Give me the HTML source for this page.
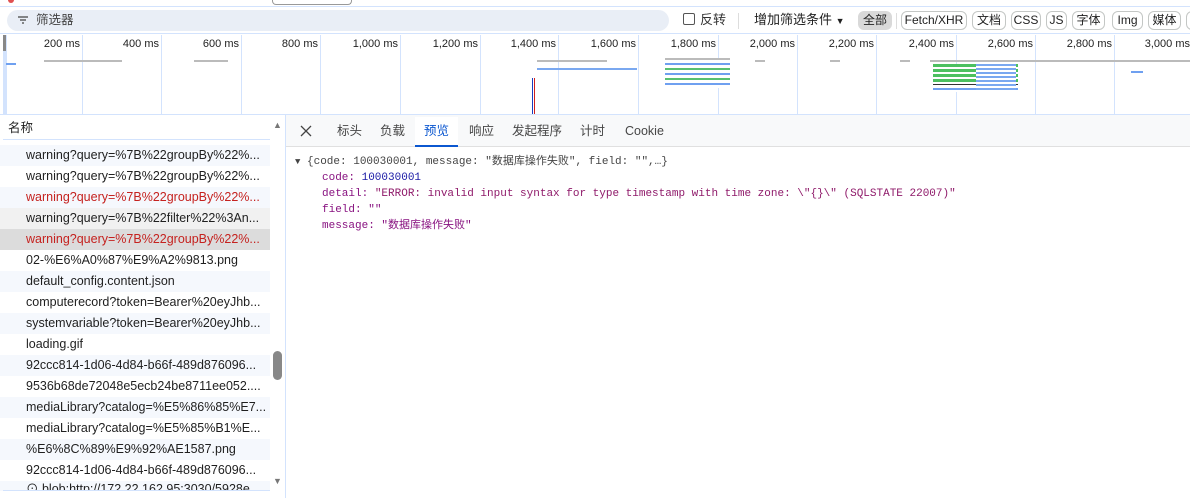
<!DOCTYPE html>
<html><head><meta charset="utf-8"><style>
*{box-sizing:border-box;margin:0;padding:0}
body{width:1190px;height:498px;overflow:hidden;background:#fff;font-family:"Liberation Sans","Noto Sans CJK SC",sans-serif;font-size:12px;color:#1f1f1f;position:relative}
.abs{position:absolute}
.chip{position:absolute;top:11px;height:19px;border:1px solid #c4c7c5;border-radius:6px;font-size:12px;line-height:17px;text-align:center;color:#1f1f1f;background:#fff}
.lbl{position:absolute;top:38px;font-size:11px;color:#222;text-align:right;width:70px}
.vl{position:absolute;top:35px;height:79px;width:1px;background:#d3e3fd}
.row{position:absolute;left:0;width:270px;height:21px;line-height:21px;padding-left:26px;font-size:12.5px;white-space:nowrap;overflow:hidden}
.mono{font-family:"Liberation Mono","Noto Sans CJK SC",monospace;font-size:11px;line-height:14px;position:absolute;white-space:pre}
.tab{position:absolute;top:123px;font-size:12.5px;line-height:16px;height:16px;color:#474747}
.bar{position:absolute;height:2px}
</style></head><body>
<div class="abs" style="left:0;top:0;width:1190px;height:7px;background:#fff;border-bottom:1px solid #d3e3fd"></div>
<div class="abs" style="left:8px;top:0;width:6px;height:3px;background:#e05050;border-radius:0 0 3px 3px"></div>
<div class="abs" style="left:272px;top:0;width:80px;height:5px;border:1px solid #999;border-top:none;border-radius:0 0 4px 4px"></div>
<div class="abs" style="left:7px;top:10px;width:662px;height:21px;background:#e9eef6;border-radius:11px"></div>
<svg class="abs" style="left:17px;top:14px" width="12" height="12"><path d="M1 3h10M3 6h6M5 9h2" stroke="#444" stroke-width="1.3"/></svg>
<div class="abs" style="left:36px;top:12px;font-size:12.5px;line-height:16px;color:#444">筛选器</div>
<div class="abs" style="left:683px;top:13px;width:12px;height:12px;border:1px solid #555;border-radius:2px"></div>
<div class="abs" style="left:700px;top:12px;font-size:13px;line-height:16px;color:#333">反转</div>
<div class="abs" style="left:738px;top:13px;width:1px;height:16px;background:#ddd"></div>
<div class="abs" style="left:754px;top:12px;font-size:13px;line-height:16px;color:#1f1f1f">增加筛选条件 <span style="font-size:9px">▼</span></div>
<div class="chip" style="left:858px;width:34px;background:#d9d9d9;border-color:#d9d9d9">全部</div>
<div class="abs" style="left:896px;top:13px;width:1px;height:16px;background:#ddd"></div>
<div class="chip" style="left:901px;width:66px">Fetch/XHR</div>
<div class="chip" style="left:972px;width:34px">文档</div>
<div class="chip" style="left:1011px;width:30px">CSS</div>
<div class="chip" style="left:1046px;width:21px">JS</div>
<div class="chip" style="left:1072px;width:33px">字体</div>
<div class="chip" style="left:1112px;width:31px">Img</div>
<div class="chip" style="left:1148px;width:33px">媒体</div>
<div class="chip" style="left:1186px;width:20px">&nbsp;</div>
<div class="abs" style="left:0;top:33px;width:1190px;height:1px;background:#d3e3fd"></div>
<div class="abs" style="left:0;top:114px;width:1190px;height:1px;background:#d3e3fd"></div>
<div class="abs" style="left:3px;top:35px;width:4px;height:79px;background:#d3e3fd"></div>
<div class="abs" style="left:3px;top:35px;width:3px;height:16px;background:#888"></div>
<div class="vl" style="left:82px"></div><div class="vl" style="left:161px"></div><div class="vl" style="left:241px"></div><div class="vl" style="left:320px"></div><div class="vl" style="left:400px"></div><div class="vl" style="left:480px"></div><div class="vl" style="left:558px"></div><div class="vl" style="left:638px"></div><div class="vl" style="left:718px"></div><div class="vl" style="left:797px"></div><div class="vl" style="left:876px"></div><div class="vl" style="left:956px"></div><div class="vl" style="left:1035px"></div><div class="vl" style="left:1114px"></div>
<div class="lbl" style="left:10px">200 ms</div><div class="lbl" style="left:89px">400 ms</div><div class="lbl" style="left:169px">600 ms</div><div class="lbl" style="left:248px">800 ms</div><div class="lbl" style="left:328px">1,000 ms</div><div class="lbl" style="left:408px">1,200 ms</div><div class="lbl" style="left:486px">1,400 ms</div><div class="lbl" style="left:566px">1,600 ms</div><div class="lbl" style="left:646px">1,800 ms</div><div class="lbl" style="left:725px">2,000 ms</div><div class="lbl" style="left:804px">2,200 ms</div><div class="lbl" style="left:884px">2,400 ms</div><div class="lbl" style="left:963px">2,600 ms</div><div class="lbl" style="left:1042px">2,800 ms</div><div class="lbl" style="left:1120px">3,000 ms</div>
<div class="bar" style="left:44px;top:60px;width:78px;background:#bbb"></div>
<div class="bar" style="left:194px;top:60px;width:34px;background:#bbb"></div>
<div class="bar" style="left:6px;top:63px;width:10px;background:#6fa0f0"></div>
<div class="abs" style="left:532px;top:78px;width:1px;height:36px;background:#1a3fc0"></div>
<div class="abs" style="left:534px;top:78px;width:1px;height:36px;background:#d02020"></div>
<div class="bar" style="left:537px;top:68px;width:100px;background:#7aa8f0"></div>
<div class="bar" style="left:537px;top:60px;width:70px;background:#bbb"></div>
<div class="abs" style="left:665px;top:58px;width:65px;height:30px;background:linear-gradient(#bbb 0 2px,#fff 2px 5px,#6fa0f0 5px 7px,#fff 7px 10px,#58c070 10px 12px,#fff 12px 15px,#6fa0f0 15px 17px,#fff 17px 20px,#58c070 20px 22px,#fff 22px 25px,#6fa0f0 25px 27px,#fff 27px)"></div>
<div class="bar" style="left:755px;top:60px;width:10px;background:#bbb"></div>
<div class="bar" style="left:830px;top:60px;width:10px;background:#bbb"></div>
<div class="bar" style="left:900px;top:60px;width:10px;background:#bbb"></div>
<div class="bar" style="left:930px;top:60px;width:260px;background:#bbb"></div>
<div class="abs" style="left:933px;top:64px;width:85px;height:28px;background:linear-gradient(#4cc060 0 3px,#fff 3px 5px,#4cc060 5px 8px,#fff 8px 10px,#4cc060 10px 13px,#fff 13px 15px,#4cc060 15px 18px,#fff 18px 20px,#333 20px 21px,#fff 21px 24px,#6fa0f0 24px 26px,#fff 26px)"></div>
<div class="abs" style="left:976px;top:64px;width:40px;height:28px;background:repeating-linear-gradient(#7aa8f0 0 2px,#fff 2px 4px)"></div>
<div class="bar" style="left:1131px;top:71px;width:12px;background:#6fa0f0"></div>
<div class="abs" style="left:0;top:115px;width:286px;height:383px;background:#fff"></div>
<div class="abs" style="left:3px;top:117px;width:267px;height:23px;border-bottom:1px solid #d3e3fd"></div>
<div class="abs" style="left:8px;top:120px;font-size:12.5px;line-height:16px">名称</div>
<div class="abs" style="left:285px;top:115px;width:1px;height:383px;background:#d3e3fd"></div>
<div class="abs" style="left:273px;top:120px;font-size:9px;color:#777">▲</div>
<div class="abs" style="left:273px;top:476px;font-size:9px;color:#777">▼</div>
<div class="abs" style="left:273px;top:351px;width:9px;height:29px;background:#888;border-radius:5px"></div>
<div class="row" style="top:145px;background:#f5f8fd">warning?query=%7B%22groupBy%22%...</div>
<div class="row" style="top:166px">warning?query=%7B%22groupBy%22%...</div>
<div class="row" style="top:187px;background:#f5f8fd;color:#c5221f">warning?query=%7B%22groupBy%22%...</div>
<div class="row" style="top:208px;background:#f1f1f1">warning?query=%7B%22filter%22%3An...</div>
<div class="row" style="top:229px;background:#dcdcdc;color:#c5221f">warning?query=%7B%22groupBy%22%...</div>
<div class="row" style="top:250px">02-%E6%A0%87%E9%A2%9813.png</div>
<div class="row" style="top:271px;background:#f5f8fd">default_config.content.json</div>
<div class="row" style="top:292px">computerecord?token=Bearer%20eyJhb...</div>
<div class="row" style="top:313px;background:#f5f8fd">systemvariable?token=Bearer%20eyJhb...</div>
<div class="row" style="top:334px">loading.gif</div>
<div class="row" style="top:355px;background:#f5f8fd">92ccc814-1d06-4d84-b66f-489d876096...</div>
<div class="row" style="top:376px">9536b68de72048e5ecb24be8711ee052....</div>
<div class="row" style="top:397px;background:#f5f8fd">mediaLibrary?catalog=%E5%86%85%E7...</div>
<div class="row" style="top:418px">mediaLibrary?catalog=%E5%85%B1%E...</div>
<div class="row" style="top:439px;background:#f5f8fd">%E6%8C%89%E9%92%AE1587.png</div>
<div class="row" style="top:460px">92ccc814-1d06-4d84-b66f-489d876096...</div>
<div class="row" style="top:481px;background:#f5f8fd;height:10px;line-height:16px">⊙ blob:http://172.22.162.95:3030/5928e</div>
<div class="abs" style="left:3px;top:490px;width:267px;height:1px;background:#d3e3fd"></div>
<div class="abs" style="left:0;top:491px;width:285px;height:7px;background:#fff"></div>
<div class="abs" style="left:286px;top:115px;width:904px;height:32px;background:#f8f9fa;border-bottom:1px solid #e0e0e0"></div>
<svg class="abs" style="left:300px;top:125px" width="12" height="12"><path d="M1 1L11 11M11 1L1 11" stroke="#444" stroke-width="1.3"/></svg>
<div class="abs" style="left:415px;top:117px;width:43px;height:30px;background:#fff"></div>
<div class="abs" style="left:415px;top:145px;width:43px;height:2px;background:#0b57d0"></div>
<div class="tab" style="left:337px">标头</div><div class="tab" style="left:380px">负载</div><div class="tab" style="left:424px;color:#0b57d0">预览</div><div class="tab" style="left:469px">响应</div><div class="tab" style="left:512px">发起程序</div><div class="tab" style="left:580px">计时</div><div class="tab" style="left:625px">Cookie</div>
<div class="mono" style="left:295px;top:155px;color:#444"><span style="font-size:9px">▼</span> {code: 100030001, message: "数据库操作失败", field: "",…}</div>
<div class="mono" style="left:322px;top:171px;color:#881280">code: <span style="color:#1a1aa6">100030001</span></div>
<div class="mono" style="left:322px;top:187px;color:#881280">detail: <span style="color:#8f1a6a">"ERROR: invalid input syntax for type timestamp with time zone: \"{}\" (SQLSTATE 22007)"</span></div>
<div class="mono" style="left:322px;top:203px;color:#881280">field: <span>""</span></div>
<div class="mono" style="left:322px;top:219px;color:#881280">message: <span>"数据库操作失败"</span></div>
</body></html>
